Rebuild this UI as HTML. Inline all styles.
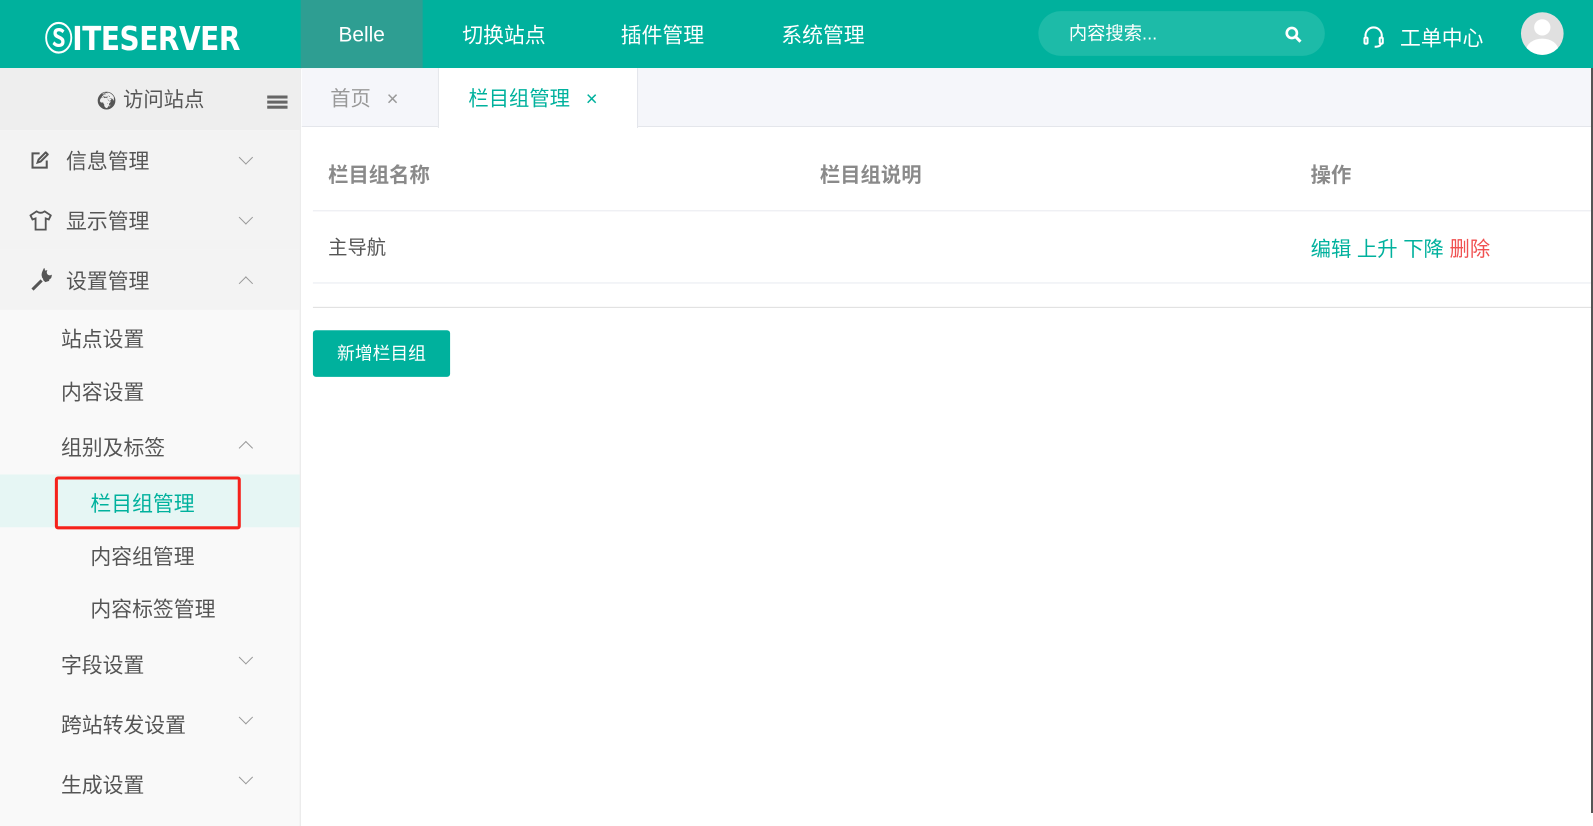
<!DOCTYPE html>
<html><head><meta charset="utf-8"><style>
*{margin:0;padding:0;box-sizing:border-box}
body{width:1593px;height:813px;overflow:hidden;font-family:"Liberation Sans","Noto Sans CJK SC",sans-serif;background:#fff;position:relative;color:#555}
#w{position:absolute;left:0;top:0;width:1568px;height:800px;transform:scale(1.016);transform-origin:0 0}
.hd{position:absolute;left:0;top:0;width:1568px;height:67px;background:#00b19d;color:#fff}
.logo{position:absolute;left:44px;top:13px;font-size:32px;font-weight:bold;font-family:"DejaVu Sans","Liberation Sans",sans-serif;transform:scaleX(0.86);transform-origin:left;letter-spacing:-0.5px}
.nav{position:absolute;top:2px;height:67px;line-height:67px;font-size:20.5px;text-align:center}
.search{position:absolute;left:1022px;top:11px;width:282px;height:44px;border-radius:22px;background:#1dbba8;font-size:18px;line-height:44px;padding-left:30px}
.av{position:absolute;left:1497px;top:12px;width:42px;height:42px;border-radius:50%;background:#e0e0e0;overflow:hidden}
.sb{position:absolute;left:0;top:67px;width:296px;height:746px;background:#f9f9f9;border-right:1px solid #e6e6e6}
.top{height:61px;background:#eee;line-height:64px;text-align:center;font-size:20px;color:#555}
.it{position:absolute;left:0;width:295px;font-size:20.5px;color:#555}
.l1{background:#f3f3f3;height:59px;line-height:63px;padding-left:65px}
.ch{position:absolute;left:237px;width:10px;height:10px;border-left:1.5px solid #999;border-top:1.5px solid #999}
.tabs{position:absolute;left:297px;top:67px;width:1296px;height:58px;background:#f5f6fa;border-bottom:1px solid #e4e6eb}
.tab{position:absolute;top:0;height:58px;line-height:62px;font-size:20px}
.th{position:absolute;top:156px;font-size:20px;font-weight:bold;color:#8a8a8a}
</style></head><body><div id="w">
<div class="hd">
<div class="logo">ⓈITESERVER</div>
<div class="nav" style="left:296px;width:120px;background:#2e9e92;top:0;line-height:69px">Belle</div>
<div class="nav" style="left:452px;width:88px">切换站点</div>
<div class="nav" style="left:608px;width:88px">插件管理</div>
<div class="nav" style="left:766px;width:88px">系统管理</div>
<div class="search">内容搜索...
<svg style="position:absolute;left:242px;top:14px" width="18" height="18" viewBox="0 0 18 18"><circle cx="7.5" cy="7.5" r="5" stroke="#fff" stroke-width="2.6" fill="none"/><path d="M11 11l5 5" stroke="#fff" stroke-width="3"/></svg></div>
<svg style="position:absolute;left:1340px;top:24px" width="24" height="24" viewBox="0 0 24 24" fill="none" stroke="#fff" stroke-width="2"><path d="M4 14v-3a8 8 0 0 1 16 0v3"/><rect x="3" y="13" width="3" height="6" rx="1"/><rect x="18" y="13" width="3" height="6" rx="1"/><path d="M19 19q0 3-6 3"/></svg>
<div style="position:absolute;left:1378px;top:21px;font-size:20.5px">工单中心</div>
<div class="av"><div style="position:absolute;left:13px;top:7px;width:16px;height:16px;border-radius:50%;background:#fff"></div><div style="position:absolute;left:5px;top:26px;width:32px;height:24px;border-radius:50%;background:#fff"></div></div>
</div>
<div class="sb">
<div class="top"><span style="font-size:17px">🌍︎</span> 访问站点
<div style="position:absolute;left:263px;top:27px;width:20px;height:3px;background:#666;box-shadow:0 5px 0 #666,0 10px 0 #666"></div></div>
<div class="it l1" style="top:61px">信息管理<svg style="position:absolute;left:30px;top:21px" width="18" height="18" viewBox="0 0 18 18" fill="none" stroke="#555" stroke-width="2"><path d="M9 2H2v14h14V9"/><path d="M7 11l1-3 7-7 2 2-7 7z"/></svg><div class="ch" style="top:22px;transform:rotate(225deg)"></div></div>
<div class="it l1" style="top:120px">显示管理<svg style="position:absolute;left:29px;top:20px" width="22" height="20" viewBox="0 0 22 20" fill="none" stroke="#555" stroke-width="1.8"><path d="M7 1l-6 4 2 4 3-1v11h10V8l3 1 2-4-6-4q-4 3-8 0z"/></svg><div class="ch" style="top:22px;transform:rotate(225deg)"></div></div>
<div class="it l1" style="top:179px">设置管理<svg style="position:absolute;left:29px;top:18px" width="24" height="24" viewBox="0 0 24 24"><path d="M3 21l9-9M14 4a5 5 0 0 0 5 7l-3 1-1-1z" stroke="#555" stroke-width="3" fill="#555"/><circle cx="17" cy="7" r="5" fill="#555"/><circle cx="20" cy="4" r="3" fill="#f3f3f3"/></svg><div class="ch" style="top:28px;transform:rotate(45deg)"></div></div>
<div class="it" style="top:250px;padding-left:60px">站点设置</div>
<div class="it" style="top:302px;padding-left:60px">内容设置</div>
<div class="it" style="top:357px;padding-left:60px">组别及标签<div class="ch" style="top:12px;transform:rotate(45deg)"></div></div>
<div class="it" style="top:400px;height:52px;background:#e6f6f4"></div>
<div style="position:absolute;left:54px;top:402px;width:183px;height:52px;border:3px solid #f5221b;border-radius:3px"></div>
<div class="it" style="top:412px;padding-left:89px;color:#00b19d">栏目组管理</div>
<div class="it" style="top:464px;padding-left:89px">内容组管理</div>
<div class="it" style="top:516px;padding-left:89px">内容标签管理</div>
<div class="it" style="top:571px;padding-left:60px">字段设置<div class="ch" style="top:4px;transform:rotate(225deg)"></div></div>
<div class="it" style="top:630px;padding-left:60px">跨站转发设置<div class="ch" style="top:4px;transform:rotate(225deg)"></div></div>
<div class="it" style="top:689px;padding-left:60px">生成设置<div class="ch" style="top:4px;transform:rotate(225deg)"></div></div>
</div>
<div class="tabs">
<div class="tab" style="left:28px;color:#999">首页 <span style="margin-left:10px">×</span></div>
<div class="tab" style="left:134px;width:197px;background:#fff;height:59px;border-left:1px solid #e4e6eb;border-right:1px solid #e4e6eb;padding-left:29px;color:#00b19d">栏目组管理 <span style="margin-left:10px">×</span></div>
</div>
<div class="th" style="left:323px">栏目组名称</div>
<div class="th" style="left:807px">栏目组说明</div>
<div class="th" style="left:1290px">操作</div>
<div style="position:absolute;left:308px;top:207px;width:1260px;height:1px;background:#e8eaf0"></div>
<div style="position:absolute;left:323px;top:229px;font-size:19px;color:#555">主导航</div>
<div style="position:absolute;left:1290px;top:229px;font-size:20px;color:#00b19d">编辑 上升 下降 <span style="color:#f05050">删除</span></div>
<div style="position:absolute;left:308px;top:278px;width:1260px;height:1px;background:#e8eaf0"></div>
<div style="position:absolute;left:308px;top:302px;width:1260px;height:1px;background:#ddd"></div>
<div style="position:absolute;left:308px;top:325px;width:135px;height:46px;background:#00b19d;border-radius:3px;color:#fff;font-size:17.5px;line-height:46px;text-align:center">新增栏目组</div>
</div>
<div style="position:absolute;left:1591px;top:68px;width:2px;height:745px;background:#555"></div>
</body></html>
